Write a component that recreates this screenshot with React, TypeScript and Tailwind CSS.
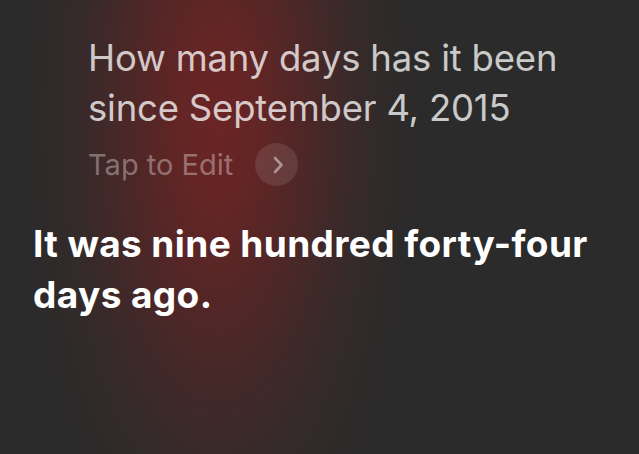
import React from "react";

export default function App() {
  return (
    <div
      className="w-[639px] h-[454px] overflow-hidden bg-[#2a2b2a] bg-[radial-gradient(ellipse_235px_580px_at_218px_120px,#6a2424_0%,#642525_15%,#552626_30%,#452828_45%,#352a2a_62%,#2c2a2a_80%,rgba(42,43,42,0)_100%)]"
      style={{ fontFamily: "Inter, 'Noto Sans', sans-serif" }}
    >
      <div className="pl-[88px] pt-[33px]">
        <p className="text-[36.5px] leading-[50px] font-normal text-white/75 tracking-[-0.2px]">
          How many days has it been
          <br />
          since September 4, 2015
        </p>
        <div className="mt-[10px] flex items-center gap-[22px]">
          <span className="text-[29px] leading-[40px] text-white/35">Tap to Edit</span>
          <div className="w-[43px] h-[43px] rounded-full bg-white/10 flex items-center justify-center">
            <svg width="16" height="20" viewBox="0 0 16 20" fill="none" className="ml-[2px]">
              <path d="M5 3l6.5 7-6.5 7" stroke="rgba(255,255,255,0.45)" strokeWidth="2.6" strokeLinecap="round" strokeLinejoin="round" />
            </svg>
          </div>
        </div>
      </div>
      <p className="pl-[33px] mt-[32px] text-[37px] leading-[51px] font-bold text-white tracking-[0.4px]">
        It was nine hundred forty-four
        <br />
        days ago.
      </p>
    </div>
  );
}
